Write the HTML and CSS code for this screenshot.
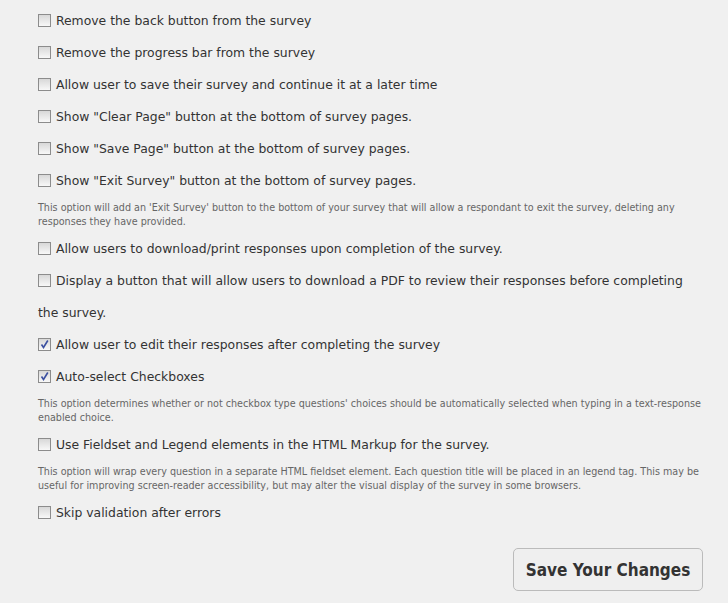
FILE: index.html
```html
<!DOCTYPE html>
<html>
<head>
<meta charset="utf-8">
<link rel="stylesheet" href="styles.css">
</head>
<body>
<div class="settings">
  <div class="opt"><label><input type="checkbox" class="cb"> Remove the back button from the survey</label></div>
  <div class="opt"><label><input type="checkbox" class="cb"> Remove the progress bar from the survey</label></div>
  <div class="opt"><label><input type="checkbox" class="cb"> Allow user to save their survey and continue it at a later time</label></div>
  <div class="opt"><label><input type="checkbox" class="cb"> Show "Clear Page" button at the bottom of survey pages.</label></div>
  <div class="opt"><label><input type="checkbox" class="cb"> Show "Save Page" button at the bottom of survey pages.</label></div>
  <div class="opt"><label><input type="checkbox" class="cb"> Show "Exit Survey" button at the bottom of survey pages.</label></div>
  <p class="note">This option will add an 'Exit Survey' button to the bottom of your survey that will allow a respondant to exit the survey, deleting any responses they have provided.</p>
  <div class="opt"><label><input type="checkbox" class="cb"> Allow users to download/print responses upon completion of the survey.</label></div>
  <div class="opt"><label><input type="checkbox" class="cb"> Display a button that will allow users to download a PDF to review their responses before completing the survey.</label></div>
  <div class="opt"><label><input type="checkbox" class="cb" checked> Allow user to edit their responses after completing the survey</label></div>
  <div class="opt"><label><input type="checkbox" class="cb" checked> Auto-select Checkboxes</label></div>
  <p class="note">This option determines whether or not checkbox type questions' choices should be automatically selected when typing in a text-response enabled choice.</p>
  <div class="opt"><label><input type="checkbox" class="cb"> Use Fieldset and Legend elements in the HTML Markup for the survey.</label></div>
  <p class="note">This option will wrap every question in a separate HTML fieldset element. Each question title will be placed in an legend tag. This may be useful for improving screen-reader accessibility, but may alter the visual display of the survey in some browsers.</p>
  <div class="opt"><label><input type="checkbox" class="cb"> Skip validation after errors</label></div>
  <div class="actions"><button class="save">Save Your Changes</button></div>
</div>
</body>
</html>
```
FILE: styles.css
```css
html, body {
  margin: 0;
  padding: 0;
  background: #f0f0f0;
}
body {
  font-family: "DejaVu Sans", Verdana, sans-serif;
  color: #333;
}
.settings {
  padding: 5px 12px 0 38px;
}
.opt {
  font-size: 12.4px;
  line-height: 32px;
  margin-right: 14px;
}
.cb {
  -webkit-appearance: none;
  appearance: none;
  width: 13px;
  height: 13px;
  margin: 0 1px 0 0;
  vertical-align: -2px;
  border: 1px solid #8c8c8c;
  background: linear-gradient(#d8d8d8, #f8f8f8);
  box-sizing: border-box;
}
.cb:checked {
  background: url("data:image/svg+xml;utf8,<svg xmlns='http://www.w3.org/2000/svg' width='11' height='11' viewBox='0 0 11 11'><path d='M2.5 5.5 L4.5 8.5 L8.8 1.5' fill='none' stroke='%233a4fa0' stroke-width='1.6'/></svg>") center/11px 11px no-repeat, linear-gradient(#d8d8d8, #f8f8f8);
}
.note {
  margin: 4px 0 5px;
  font-size: 9.6px;
  line-height: 13.5px;
  color: #666;
}
.actions {
  display: flex;
  justify-content: flex-end;
  padding: 19px 13px 0 0;
}
.save {
  font-family: "DejaVu Sans Condensed", "DejaVu Sans", sans-serif;
  font-weight: bold;
  font-size: 17px;
  white-space: nowrap;
  color: #333;
  width: 190px;
  height: 43px;
  background: #efefef;
  border: 1px solid #bbb;
  border-radius: 5px;
  margin: 0;
  padding: 0;
}
```
